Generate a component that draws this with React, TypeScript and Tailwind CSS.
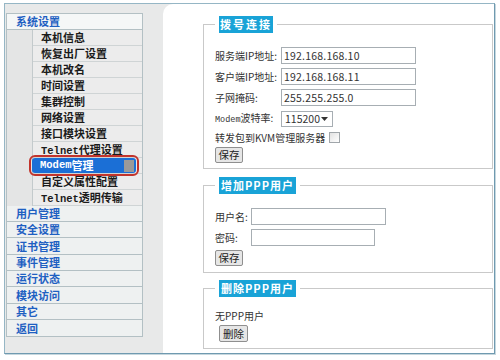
import React from 'react'

const subItems = [
  '本机信息',
  '恢复出厂设置',
  '本机改名',
  '时间设置',
  '集群控制',
  '网络设置',
  '接口模块设置',
  'Telnet代理设置',
  'Modem管理',
  '自定义属性配置',
  'Telnet透明传输',
]

const topItems: [string, string][] = [
  ['用户管理', 'h-[16px]'],
  ['安全设置', 'h-[16px]'],
  ['证书管理', 'h-[17px]'],
  ['事件管理', 'h-[16px]'],
  ['运行状态', 'h-[16px]'],
  ['模块访问', 'h-[17px]'],
  ['其它', 'h-[16px]'],
  ['返回', 'h-[17px]'],
]

// ascii runs in the nav use a mono face, like the bitmap font in the old UI
function NavText({ text }: { text: string }) {
  const parts = text.split(/([A-Za-z]+)/).filter(Boolean)
  return (
    <>
      {parts.map((p, i) =>
        /^[A-Za-z]+$/.test(p) ? (
          <span key={i} className="font-['Liberation_Mono',monospace] text-[10.5px]">
            {p}
          </span>
        ) : (
          <span key={i}>{p}</span>
        )
      )}
    </>
  )
}

function Legend({ text, w, track }: { text: string; w: string; track: string }) {
  return (
    <legend className="px-[4px]">
      <span
        className={`block ${w} ${track} h-[17px] bg-[#19a3d7] text-white font-bold text-center leading-[17px] text-[11px] whitespace-nowrap`}
      >
        {text}
      </span>
    </legend>
  )
}

function TextInput({ value, w }: { value: string; w: string }) {
  return (
    <div
      className={`${w} h-[17px] border border-[#a7aeb3] bg-white pl-[2px] leading-[15px] text-[10.5px] text-[#333] tracking-[0.2px]`}
    >
      {value}
    </div>
  )
}

function Btn({ label, cls }: { label: string; cls: string }) {
  return (
    <button
      className={`${cls} border border-[#8f8f8f] bg-[#e6e6e6] rounded-[2px] text-[10.5px] leading-[14px] text-[#222] text-center`}
    >
      {label}
    </button>
  )
}

export default function App() {
  return (
    <div className="w-[500px] h-[360px] bg-white overflow-hidden font-['Noto_Sans_CJK_SC',sans-serif] text-[11px] text-[#333]">
      <div className="mt-[3px] ml-[4px] w-[491px] h-[351px] border border-[#95b6c5] border-r-[#6f9ab0] border-b-[#6f9ab0] shadow-[1px_1px_0_#c7d7de] bg-[#e8e9e9] flex">
        {/* left nav */}
        <div className="w-[158px]">
          <div className="mt-[9px] ml-[1px] w-[137px] border-l border-r border-t border-[#b3c0c4] bg-[#e6e7e7]">
            <div className="h-[16px] border-b border-[#b3c0c4] bg-[#f5f7f7] pl-[9px] leading-[15px] text-[#1e60c2] font-bold">
              系统设置
            </div>
            <div className="flex">
              <div className="w-[26px] bg-[#e4e5e5] border-r border-[#c3cacc]" />
              <div className="flex-1">
                {subItems.map((s) =>
                  s === 'Modem管理' ? (
                    <div key={s} className="h-[16px] border-b border-[#cfd4d5] bg-[#ececec] pr-[6px]">
                      <div className="h-[15px] -ml-[1px] bg-[#1b6fd6] rounded-[3px] outline-2 outline-[#c2342c] outline-offset-[1px] flex items-center pl-[8px] text-white font-bold">
                        <NavText text={s} />
                        <div className="ml-auto mr-[2px] w-[10px] h-[12px] bg-[#9a9a9a]" />
                      </div>
                    </div>
                  ) : (
                    <div
                      key={s}
                      className="h-[16px] border-b border-[#cfd4d5] bg-[#ececec] pl-[8px] leading-[15px] font-bold text-[#1b1b1b]"
                    >
                      <NavText text={s} />
                    </div>
                  )
                )}
              </div>
            </div>
            {topItems.map(([t, h]) => (
              <div
                key={t}
                className={`${h} border-b border-[#b3c0c4] bg-[#eef1f1] pl-[9px] flex items-center text-[#1e60c2] font-bold`}
              >
                {t}
              </div>
            ))}
          </div>
        </div>

        {/* right content */}
        <div className="flex-1 bg-white rounded-tl-[10px] pl-[40px] pr-[1px] pt-[12px] text-[10px]">
          <fieldset className="border border-[#c9c9c9] pl-[11px] pt-[12px] pb-[5px]">
            <Legend text="拨号连接" w="w-[54px]" track="tracking-[2px]" />
            <div className="h-[21px] flex items-center">
              <span className="w-[66px] whitespace-nowrap">服务端IP地址:</span>
              <TextInput value="192.168.168.10" w="w-[135px]" />
            </div>
            <div className="h-[21px] flex items-center">
              <span className="w-[66px] whitespace-nowrap">客户端IP地址:</span>
              <TextInput value="192.168.168.11" w="w-[135px]" />
            </div>
            <div className="h-[21px] flex items-center">
              <span className="w-[66px] whitespace-nowrap">子网掩码:</span>
              <TextInput value="255.255.255.0" w="w-[135px]" />
            </div>
            <div className="h-[21px] flex items-center">
              <span className="w-[66px] whitespace-nowrap">
                <span className="font-['Liberation_Mono',monospace] text-[8.5px]">Modem</span>波特率:
              </span>
              <div className="w-[52px] h-[16px] border border-[#a7aeb3] flex items-center pl-[3px] leading-[14px] text-[10.5px]">
                <span>115200</span>
                <svg width="7" height="4" viewBox="0 0 7 4" className="ml-auto mr-[4px]">
                  <path d="M0 0h7L3.5 4z" fill="#333" />
                </svg>
              </div>
            </div>
            <div className="h-[16px] flex items-center">
              <span className="whitespace-nowrap">转发包到KVM管理服务器</span>
              <div className="ml-[4px] w-[11px] h-[11px] border border-[#a0a6aa] bg-gradient-to-br from-[#e2e2e2] to-white" />
            </div>
            <Btn label="保存" cls="mt-[2px] w-[28px] h-[16px] block" />
          </fieldset>

          <fieldset className="mt-[8px] border border-[#c9c9c9] pl-[11px] pt-[12px] pb-[6px]">
            <Legend text="增加PPP用户" w="w-[77px]" track="tracking-[1px]" />
            <div className="h-[21px] flex items-center">
              <span className="w-[36px] whitespace-nowrap">用户名:</span>
              <TextInput value="" w="w-[135px]" />
            </div>
            <div className="h-[21px] flex items-center">
              <span className="w-[36px] whitespace-nowrap">密码:</span>
              <TextInput value="" w="w-[124px]" />
            </div>
            <Btn label="保存" cls="mt-[2px] w-[28px] h-[16px] block" />
          </fieldset>

          <fieldset className="mt-[7px] border border-[#c9c9c9] pl-[11px] pt-[10px] pb-[6px]">
            <Legend text="删除PPP用户" w="w-[77px]" track="tracking-[1px]" />
            <div className="h-[16px] flex items-center">无PPP用户</div>
            <Btn label="删除" cls="mt-[2px] ml-[4px] w-[29px] h-[17px] block" />
          </fieldset>
        </div>
      </div>
    </div>
  )
}
